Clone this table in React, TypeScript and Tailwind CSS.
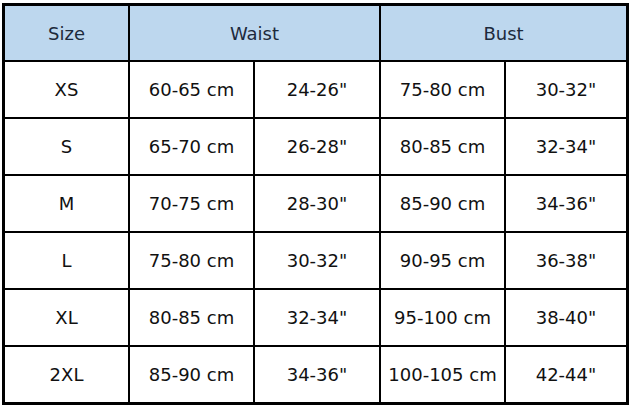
import React from "react";

const rows = [
  ["XS", "60-65 cm", '24-26"', "75-80 cm", '30-32"'],
  ["S", "65-70 cm", '26-28"', "80-85 cm", '32-34"'],
  ["M", "70-75 cm", '28-30"', "85-90 cm", '34-36"'],
  ["L", "75-80 cm", '30-32"', "90-95 cm", '36-38"'],
  ["XL", "80-85 cm", '32-34"', "95-100 cm", '38-40"'],
  ["2XL", "85-90 cm", '34-36"', "100-105 cm", '42-44"'],
];

export default function App() {
  return (
    <div className="w-[633px] h-[408px] bg-white pl-[2px] pt-[3px]" style={{ fontFamily: '"DejaVu Sans", Verdana, sans-serif' }}>
      <div className="w-fit border-[3px] border-black bg-black grid grid-cols-[123px_123px_124px_123px_120px] grid-rows-[54px_repeat(6,55px)] gap-[2px] text-[18px]">
        <div className="bg-[#bdd7ee] text-[#1c2a3c] flex items-center justify-center">Size</div>
        <div className="col-span-2 bg-[#bdd7ee] text-[#1c2a3c] flex items-center justify-center">Waist</div>
        <div className="col-span-2 bg-[#bdd7ee] text-[#1c2a3c] flex items-center justify-center">Bust</div>
        {rows.map((r) =>
          r.map((c, i) => (
            <div key={r[0] + i} className="bg-white text-[#111] flex items-center justify-center">
              {c}
            </div>
          ))
        )}
      </div>
    </div>
  );
}
